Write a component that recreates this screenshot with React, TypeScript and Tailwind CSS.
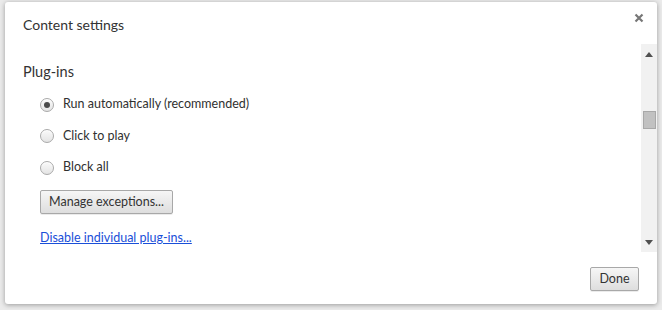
import { useState } from "react";

type PluginMode = "auto" | "click" | "block";

const font = { fontFamily: 'Lato, "Noto Sans", sans-serif' };

function Radio({ checked, label, onClick }: { checked: boolean; label: string; onClick: () => void }) {
  return (
    <label className="flex items-center h-[31.5px] cursor-pointer" onClick={onClick}>
      <span className="flex items-center justify-center w-[14px] h-[14px] rounded-full border border-[#a9a9a9] bg-gradient-to-b from-[#fafafa] to-[#e4e4e4] shadow-[inset_0_1px_0_#fff]">
        {checked && <span className="w-[6px] h-[6px] rounded-full bg-[#4a4a4a]" />}
      </span>
      <span className="ml-[9px] text-[12.5px] text-[#303030]">{label}</span>
    </label>
  );
}

export default function App() {
  const [mode, setMode] = useState<PluginMode>("auto");

  return (
    <div className="w-[662px] h-[310px] bg-[#ebebeb] overflow-hidden" style={font}>
      <div className="ml-[5px] mt-[2px] w-[652px] h-[302px] bg-white rounded-[3px] shadow-[0_1px_5px_rgba(0,0,0,0.35)] flex flex-col">
        {/* header */}
        <div className="flex items-start justify-between h-[42px] pl-[18px] pr-[11px]">
          <h1 className="mt-[12px] text-[14px] text-[#333]">Content settings</h1>
          <button className="mt-[9px] w-[14px] h-[14px] flex items-center justify-center">
            <svg width="10" height="10" viewBox="0 0 10 10">
              <path d="M1.5 1.5 L8.5 8.5 M8.5 1.5 L1.5 8.5" stroke="#777" strokeWidth="2.2" />
            </svg>
          </button>
        </div>

        {/* scrolling content */}
        <div className="flex h-[208px]">
          <div className="flex-1 pl-[18px] pt-[17px]">
            <h2 className="text-[14.5px] text-[#333] mb-[6px]">Plug-ins</h2>
            <div className="pl-[17px]">
              <Radio checked={mode == "auto"} label="Run automatically (recommended)" onClick={() => setMode("auto")} />
              <Radio checked={mode == "click"} label="Click to play" onClick={() => setMode("click")} />
              <Radio checked={mode == "block"} label="Block all" onClick={() => setMode("block")} />
              <button className="mt-[7px] h-[24px] w-[133px] rounded-[2px] border border-[#a8a8a8] bg-gradient-to-b from-[#f6f6f6] to-[#dedede] text-[12.5px] text-[#333] shadow-[0_1px_0_rgba(0,0,0,0.08)]">
                Manage exceptions...
              </button>
              <div className="mt-[14px] leading-[16px]">
                <a className="text-[12.5px] text-[#1a4fd8] underline cursor-pointer">Disable individual plug-ins...</a>
              </div>
            </div>
          </div>
          <div className="w-[16px] bg-[#f1f1f1] flex flex-col items-center">
            <svg className="mt-[8px]" width="8" height="5" viewBox="0 0 8 5">
              <path d="M0 5 L4 0 L8 5 Z" fill="#505050" />
            </svg>
            <div className="mt-[54px] w-[13px] h-[18px] bg-[#c1c1c1] border border-[#a8a8a8]" />
            <div className="flex-1" />
            <svg className="mb-[7px]" width="8" height="5" viewBox="0 0 8 5">
              <path d="M0 0 L8 0 L4 5 Z" fill="#505050" />
            </svg>
          </div>
        </div>

        {/* footer */}
        <div className="flex justify-end pr-[18px] pt-[15px]">
          <button className="h-[24px] w-[49px] rounded-[2px] border border-[#a8a8a8] bg-gradient-to-b from-[#f6f6f6] to-[#dedede] text-[12.5px] text-[#333] shadow-[0_1px_0_rgba(0,0,0,0.08)]">
            Done
          </button>
        </div>
      </div>
    </div>
  );
}
